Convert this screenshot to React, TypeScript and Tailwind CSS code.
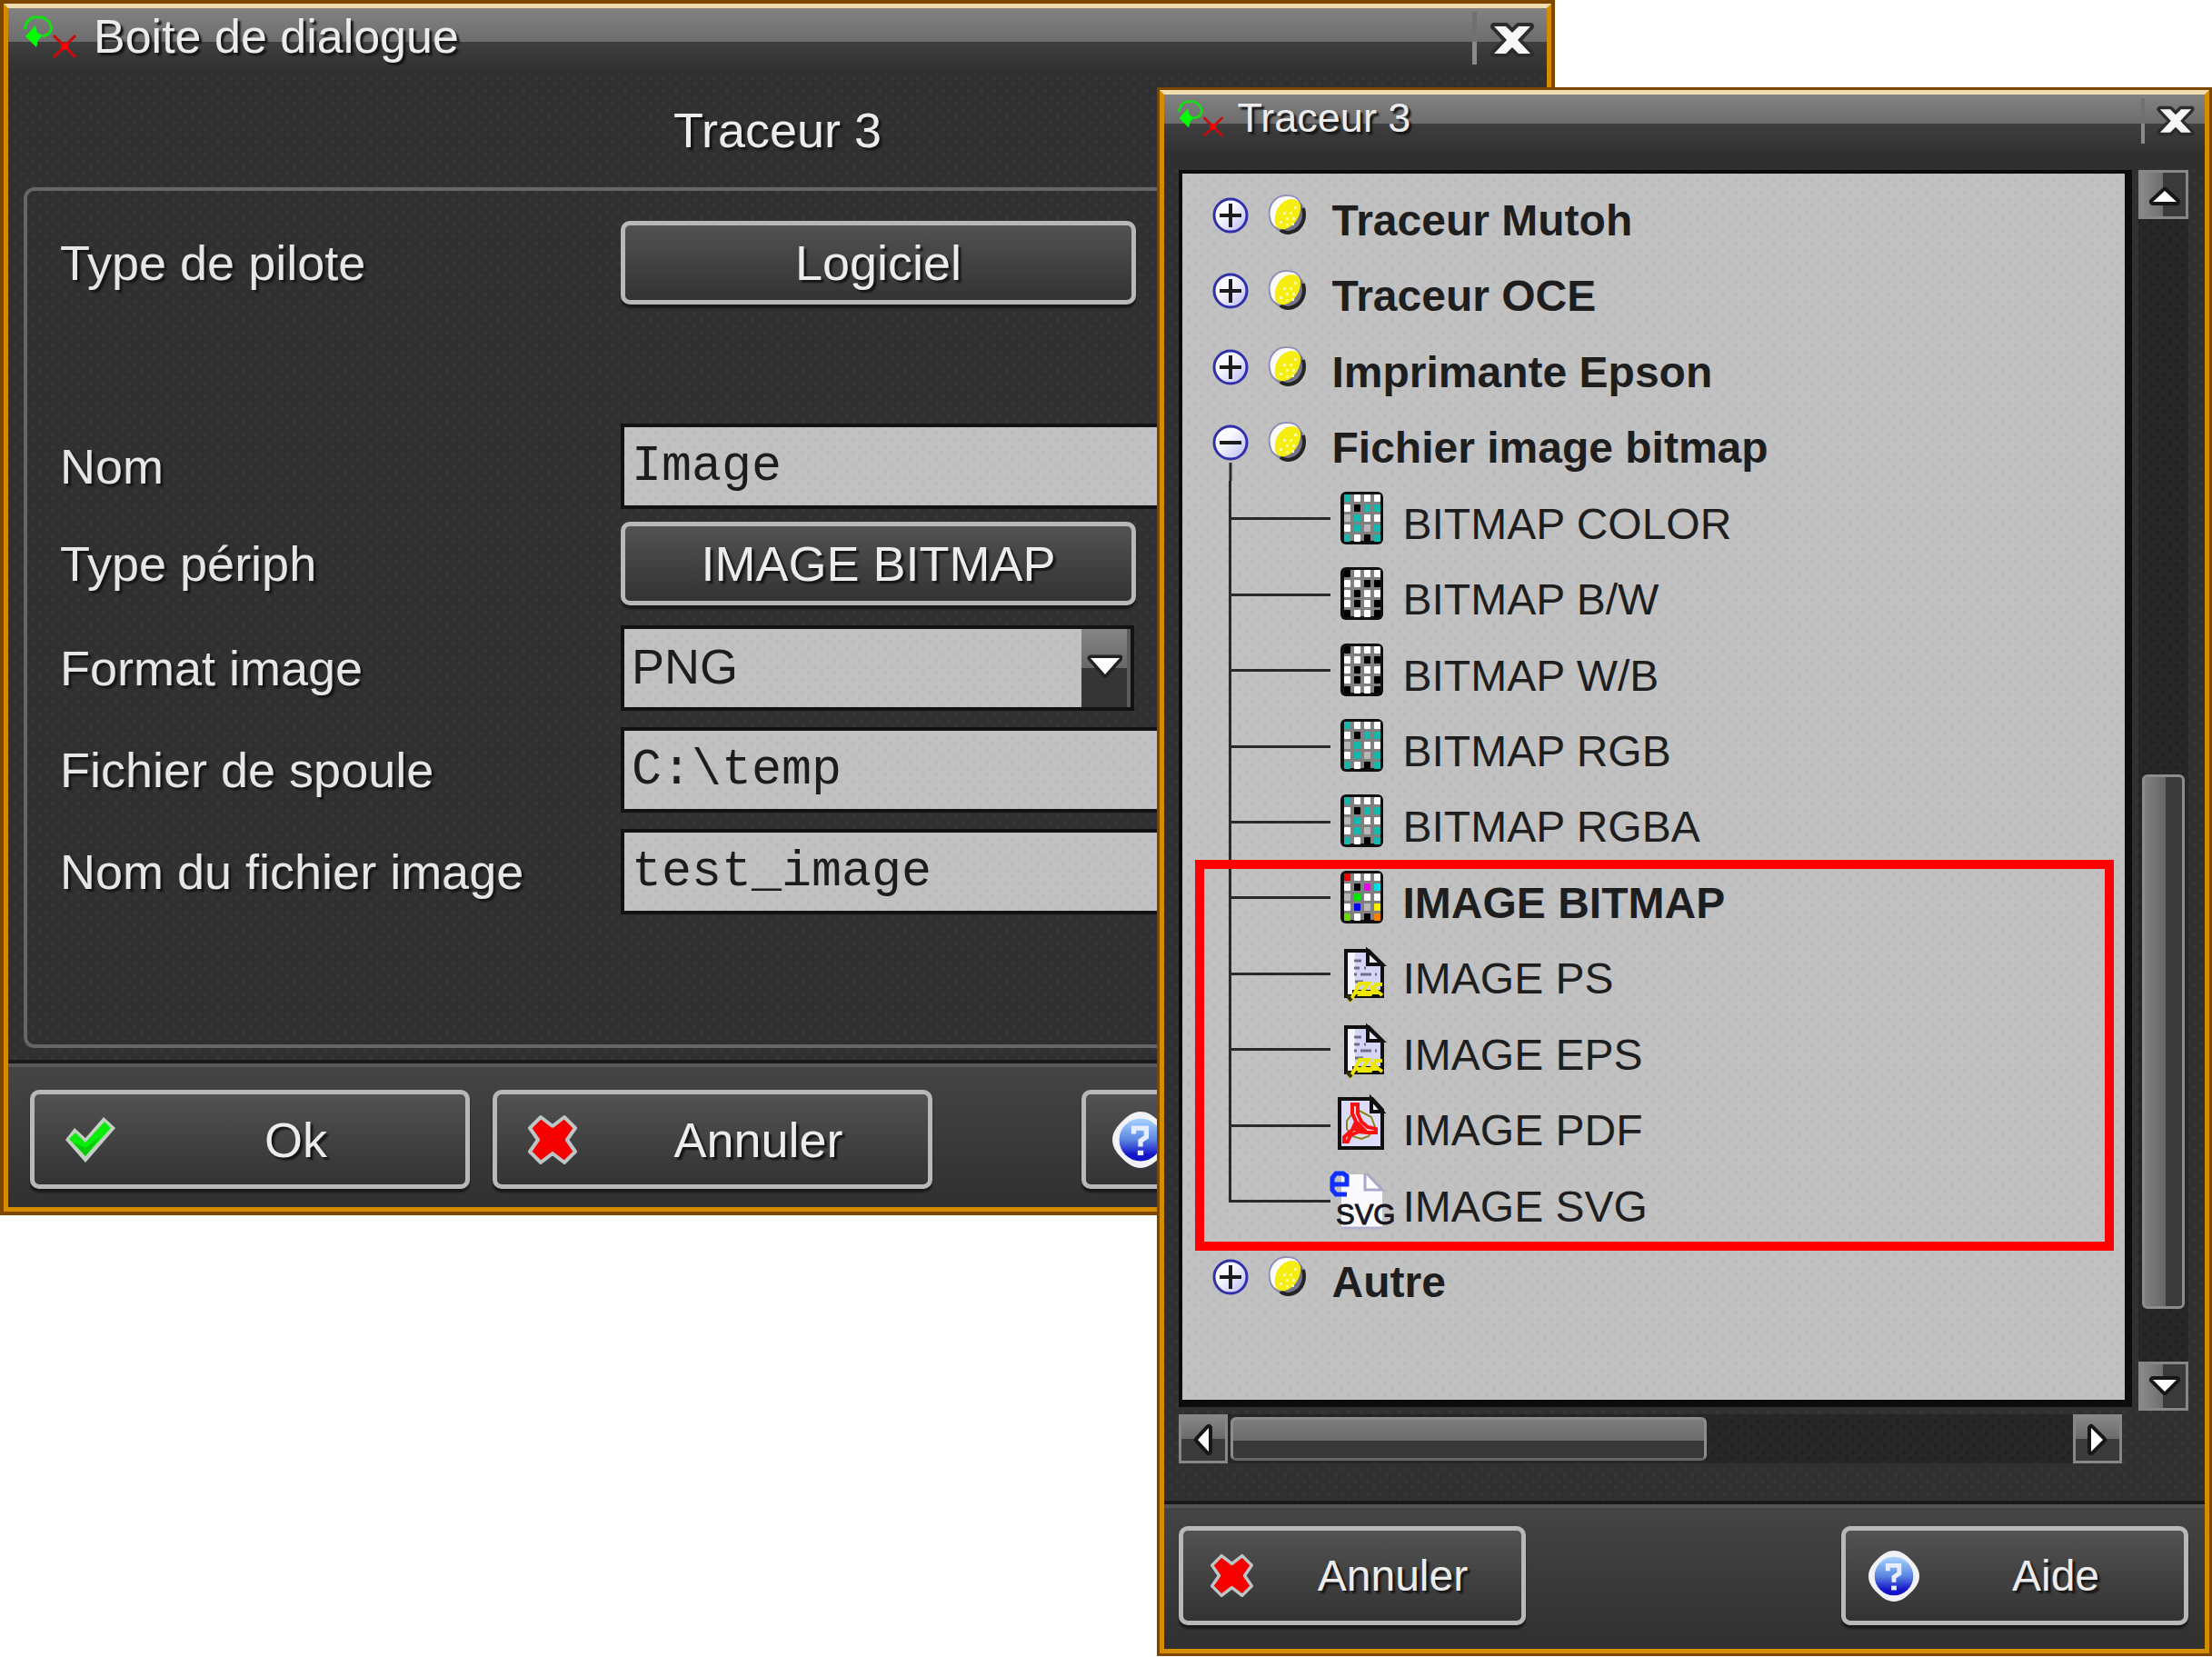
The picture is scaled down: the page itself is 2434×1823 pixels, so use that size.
import { useId, type ReactNode } from "react";

const darkDots =
  "bg-[#303030] [background-image:radial-gradient(circle,#373737_1px,transparent_3px),radial-gradient(circle,#373737_1px,transparent_3px)] [background-size:14px_14px] [background-position:0_0,7px_7px]";
const lightDots =
  "bg-[#c1c1c1] [background-image:radial-gradient(circle,#bababa_1px,transparent_3px),radial-gradient(circle,#bababa_1px,transparent_3px)] [background-size:14px_14px] [background-position:0_0,7px_7px]";
const trackDots =
  "bg-[#272727] [background-image:radial-gradient(circle,#202020_1px,transparent_3px),radial-gradient(circle,#202020_1px,transparent_3px)] [background-size:14px_14px] [background-position:0_0,7px_7px]";

const push =
  "rounded-[10px] border-[5px] border-[#b8b8b8] bg-linear-to-b from-[#525252] to-[#333333] text-[#ececec] shadow-[0_4px_2px_#1a1a1a]";

function AppIcon({ className }: { className: string }) {
  return (
    <svg viewBox="0 0 60 48" className={className} aria-hidden="true">
      <path d="M2 16L5 8L11 3H22L29 8L32 15L29 21L22 24" fill="none" stroke="#12e012" strokeWidth="3" />
      <path d="M3 24L14 12L16 20L22 23L17 28L15 36Z" fill="#0f0" />
      <path d="M34 23L58 47M58 23L34 47" stroke="#d00808" strokeWidth="3" />
      <circle cx="46" cy="35" r="4" fill="#f00" />
    </svg>
  );
}

function CloseIcon({ className }: { className: string }) {
  return (
    <svg viewBox="0 0 50 42" className={className} aria-hidden="true">
      <g strokeLinejoin="round">
        <path
          d="M5 6H18L25 13L32 6H45L31 21L45 36H32L25 29L18 36H5L19 21Z"
          fill="none"
          stroke="#2c2c2c"
          strokeWidth="8"
        />
        <path d="M5 6H18L25 13L32 6H45L31 21L45 36H32L25 29L18 36H5L19 21Z" fill="#f7f7f7" />
      </g>
    </svg>
  );
}

function CheckIcon({ className }: { className: string }) {
  return (
    <svg viewBox="0 0 56 56" className={className} aria-hidden="true">
      <path d="M1 28L11 15L23 26L43 3L56 15L23 53Z" fill="#c4d0c4" />
      <path d="M5 27L12 20L23 31L44 8L51 15L23 46Z" fill="#0aec0a" />
      <path d="M10 31L23 37L40 24L23 46Z" fill="#08c808" />
    </svg>
  );
}

function CrossIcon({ className }: { className: string }) {
  return (
    <svg viewBox="0 0 56 56" className={className} aria-hidden="true">
      <path
        d="M15 3L28 13L41 3L53 15L44 28L53 41L41 53L28 43L15 53L3 41L12 28L3 15Z"
        fill="#f60000"
        stroke="#bcc6c6"
        strokeWidth="4"
        strokeLinejoin="round"
      />
    </svg>
  );
}

function HelpIcon({ className }: { className: string }) {
  const id = useId();
  return (
    <svg viewBox="0 0 60 60" className={className} aria-hidden="true">
      <defs>
        <linearGradient id={id} x1="0" y1="0" x2="0" y2="1">
          <stop offset="0" stopColor="#a8d4ff" />
          <stop offset="0.5" stopColor="#5b86e0" />
          <stop offset="0.85" stopColor="#1414c8" />
        </linearGradient>
      </defs>
      <path
        d="M30 1C38 1 44 6 49 11C54 16 59 22 59 30C59 38 54 44 49 49C44 54 38 59 30 59C22 59 16 54 11 49C6 44 1 38 1 30C1 22 6 16 11 11C16 6 22 1 30 1Z"
        fill="#f2f2f6"
      />
      <circle cx="30" cy="30" r="22" fill={`url(#${id})`} />
      <path d="M23 24V18H36V27L30 31V37" fill="none" stroke="#e8eefc" strokeWidth="5" />
      <rect x="27" y="41" width="6" height="5" fill="#e8eefc" />
    </svg>
  );
}

function Expander({ open }: { open: boolean }) {
  const id = useId();
  return (
    <svg viewBox="0 0 42 84" className="h-[84px] w-[42px]" aria-hidden="true">
      <defs>
        <linearGradient id={id} x1="0" y1="0" x2="1" y2="1">
          <stop offset="0.4" stopColor="#f8f8ff" />
          <stop offset="1" stopColor="#b4b4f4" />
        </linearGradient>
      </defs>
      <circle cx="21" cy="42" r="18" fill={`url(#${id})`} stroke="#3030a8" strokeWidth="3" />
      <path d="M9 42H33" stroke="#1c1c1c" strokeWidth="4" />
      {open ? <path d="M21 64V84" stroke="#2a2a2a" strokeWidth="3" /> : <path d="M21 29V55" stroke="#1c1c1c" strokeWidth="4" />}
    </svg>
  );
}

function Ball() {
  return (
    <svg viewBox="0 0 44 48" className="h-12 w-11" aria-hidden="true">
      <circle cx="21" cy="23" r="20" fill="#74748c" />
      <path d="M14 40C20 45 29 43 34 38C40 32 41 24 39 16" fill="none" stroke="#242424" strokeWidth="4" />
      <path d="M3 30C-2 14 8 1 22 2C28 2 33 5 35 9L12 39C7 37 4 34 3 30Z" fill="#fafafa" stroke="#9090b8" strokeWidth="2" />
      <path d="M8 33C6 20 14 7 26 6C32 6 35 9 36 13C37 24 30 36 19 39C13 40 10 38 8 33Z" fill="#f6ee10" />
      <path
        d="M17 20h3v3h-3zM24 20h3v3h-3zM20 26h3v3h-3zM27 26h3v3h-3zM13 30h3v3h-3zM20 33h3v3h-3zM29 14h3v3h-3zM26 32h3v3h-3z"
        fill="#fff9a0"
      />
    </svg>
  );
}

const T = "#14b8ac";
const W = "#ffffff";
const K = "#000000";
const G = "#b8b8b8";
const colorCells = [T, W, W, W, W, K, T, T, G, T, W, W, W, T, G, T, T, W, K, T];
const monoCells = [K, W, W, W, W, W, K, K, W, K, W, W, W, K, W, K, K, W, W, K];
const paletteCells = [
  "#f00000", W, W, W, W, K, "#f000f0", "#00e0e8", G, "#00e800", W, W, W, "#0000f0", G, "#f8f000",
  "#70d800", W, K, "#f88000",
];

function BitmapIcon({ cells }: { cells: string[] }) {
  return (
    <>
      <rect x="11" y="12" width="47" height="58" rx="6" fill="#101010" />
      <rect x="15" y="15" width="40" height="51" fill="#808080" />
      {cells.map((c, i) => (
        <rect key={i} x={15 + (i % 4) * 11} y={15 + Math.floor(i / 4) * 11} width="7" height="8" rx="1" fill={c} />
      ))}
    </>
  );
}

function PsIcon() {
  return (
    <>
      <path d="M17 17H42L57 32V67H17Z" fill="#d4d4f4" stroke="#101010" strokeWidth="4" />
      <path d="M19 19H27V64H19Z" fill="#f4f4fc" />
      <path d="M41 17V32H57Z" fill="#e8e8f8" stroke="#101010" strokeWidth="4" />
      <path d="M26 28H34M26 36H32M37 36H39M26 43H29M33 43H45M49 43H51M27 51H36" stroke="#70708c" strokeWidth="3" />
      <path d="M24 60H58V68H24Z" fill="#101010" />
      <path
        d="M21 73L27 63L32 53H42L33 65H44L50 54H57M44 56L57 66M28 63H52"
        fill="none"
        stroke="#ece800"
        strokeWidth="4"
      />
      <path d="M18 66L23 72" stroke="#303000" strokeWidth="4" />
    </>
  );
}

function PdfIcon() {
  return (
    <>
      <path d="M10 13H46L57 25V67H10Z" fill="#dcdcf8" stroke="#101010" strokeWidth="4" />
      <path d="M45 13V27H57Z" fill="#f4f4fc" stroke="#101010" strokeWidth="4" />
      <path d="M28 24L18 37V46L24 54L34 57L42 54L49 44L45 33Z" fill="none" stroke="#8a8418" strokeWidth="2" />
      <path
        d="M24 19H30V29L34 38L41 44L50 46V50H40L31 49L22 53L19 60H15V55L24 47L28 38L24 29ZM30 40L28 46H36Z"
        fill="#ffd8e0"
        stroke="#fa1010"
        strokeWidth="4"
      />
    </>
  );
}

function SvgFileIcon() {
  return (
    <>
      <path d="M12 12H42L57 28V70H12Z" fill="#fafafe" />
      <path d="M38 11V29H57L40 11" fill="#fff" stroke="#a8a8c8" strokeWidth="3" />
      <path d="M12 71H57" stroke="#b0b0cc" strokeWidth="3" />
      <path d="M2 23H18V14L14 11H6L2 16V29L6 34H18" fill="none" stroke="#1030ff" strokeWidth="5" />
      <text x="6" y="67" fontFamily="Liberation Sans, sans-serif" fontSize="31" fill="#181820" stroke="#181820">
        SVG
      </text>
    </>
  );
}

type Leaf = { name: string; icon: ReactNode; selected?: boolean };

const drivers: Leaf[] = [
  { name: "BITMAP COLOR", icon: <BitmapIcon cells={colorCells} /> },
  { name: "BITMAP B/W", icon: <BitmapIcon cells={monoCells} /> },
  { name: "BITMAP W/B", icon: <BitmapIcon cells={monoCells} /> },
  { name: "BITMAP RGB", icon: <BitmapIcon cells={colorCells} /> },
  { name: "BITMAP RGBA", icon: <BitmapIcon cells={colorCells} /> },
];
const images: Leaf[] = [
  { name: "IMAGE BITMAP", icon: <BitmapIcon cells={paletteCells} />, selected: true },
  { name: "IMAGE PS", icon: <PsIcon /> },
  { name: "IMAGE EPS", icon: <PsIcon /> },
  { name: "IMAGE PDF", icon: <PdfIcon /> },
  { name: "IMAGE SVG", icon: <SvgFileIcon /> },
];

function Category({ name, open = false }: { name: string; open?: boolean }) {
  return (
    <li className="flex min-h-0 flex-1 items-center pl-[31px]">
      <button type="button" aria-expanded={open} aria-label={name} className="mr-5">
        <Expander open={open} />
      </button>
      <Ball />
      <span className="pt-3 pl-[27px] font-bold">{name}</span>
    </li>
  );
}

function LeafRow({ leaf, last = false }: { leaf: Leaf; last?: boolean }) {
  return (
    <li className="flex min-h-0 flex-1 items-center pl-[50px]">
      <span className="flex w-28 flex-col self-stretch">
        <span className="flex-1 border-b-[3px] border-l-[3px] border-[#2a2a2a]" />
        <span className={last ? "flex-1" : "flex-1 border-l-[3px] border-[#2a2a2a]"} />
      </span>
      <svg viewBox="0 0 76 84" className="mr-1 h-[84px] w-[76px] overflow-visible" aria-hidden="true">
        {leaf.icon}
      </svg>
      <span className={leaf.selected ? "pt-3 font-bold" : "pt-3"}>{leaf.name}</span>
    </li>
  );
}

function Frame({ className, label, children }: { className: string; label: string; children: ReactNode }) {
  return (
    <section role="dialog" aria-label={label} className={`absolute border-[#7c4600] ${className}`}>
      <div className={`border-x-[5px] border-t-[5px] border-b-[5px] border-[#d58d00] border-t-[#f1deb0] ${darkDots}`}>
        {children}
      </div>
    </section>
  );
}

function ScrollButton({ vertical, label, d }: { vertical: boolean; label: string; d: string }) {
  return (
    <button
      type="button"
      aria-label={label}
      className={
        vertical
          ? "flex h-[54px] w-full items-center justify-center border-[3px] border-[#8a8686] bg-linear-to-r from-[#8a8a8a] from-0% via-[#6e6e6e] via-50% to-[#3a3a3a] to-50%"
          : "flex h-full w-[54px] items-center justify-center border-[3px] border-[#8a8686] bg-linear-to-b from-[#868686] from-0% via-[#6a6a6a] via-50% to-[#3a3a3a] to-50%"
      }
    >
      <svg viewBox="0 0 40 40" className="size-10" aria-hidden="true">
        <path d={d} fill="#fff" stroke="#161616" strokeWidth="8" strokeLinejoin="round" />
        <path d={d} fill="#fff" />
      </svg>
    </button>
  );
}

function FieldRow({ label, id, children, up = false }: { label: string; id: string; children: ReactNode; up?: boolean }) {
  return (
    <div className={up ? "flex h-[110px] items-center pb-2" : "flex h-28 items-center"}>
      <label htmlFor={id} className={`w-[617px] shrink-0 text-[#e6e6e6] ${shadow}`}>
        {label}
      </label>
      {children}
    </div>
  );
}

const box = `h-[94px] border-4 border-[#121212] text-[#1c1c1c] outline-none ${lightDots}`;
const mono = "min-w-0 flex-1 pl-2 text-[55px] font-['Liberation_Mono',monospace]";
const shadow = "[text-shadow:3px_3px_2px_#151515]";

export default function App() {
  return (
    <main className="relative min-h-screen overflow-hidden bg-white font-['Liberation_Sans',Arial,sans-serif]">
      <Frame className="top-0 left-0 w-[70.3%] border-4" label="Boite de dialogue">
        <header className="flex h-[71px] items-start bg-linear-to-b from-[#828282] from-0% via-[#6d6d6d] via-[37px] to-transparent">
          <div className="flex h-full w-full bg-linear-to-b from-transparent from-[37px] via-[#3f3f3f] via-[37px] to-[#303030]">
            <AppIcon className="mt-[7px] ml-4 h-12 w-[60px]" />
            <h1 className={`pl-[18px] text-[52px] leading-[62px] text-[#ececec] ${shadow}`}>Boite de dialogue</h1>
            <span className="mt-1 ml-auto h-[58px] w-[5px] bg-linear-to-b from-[#707070] from-[33px] to-[#8a8a8a] to-[33px]" />
            <button type="button" aria-label="Fermer" className="mt-[14px] mr-[13px] ml-[14px] h-[42px]">
              <CloseIcon className="h-[42px] w-[50px]" />
            </button>
          </div>
        </header>
        <h2 className={`text-center text-[54px] leading-[126px] text-[#ececec] ${shadow}`}>Traceur 3</h2>
        <form className="text-[54px] leading-[62px]">
          <div className="mx-[17px] rounded-xl border-[4px] border-[#666666] pt-[23px] pr-8 pb-[134px] pl-9">
            <FieldRow label="Type de pilote" id="pilote">
              <button id="pilote" type="button" className={`h-[92px] w-[567px] ${push} ${shadow}`}>
                Logiciel
              </button>
            </FieldRow>
            <div className="h-28" />
            <FieldRow label="Nom" id="nom">
              <input id="nom" defaultValue="Image" className={`${mono} ${box}`} />
            </FieldRow>
            <FieldRow label="Type périph" id="periph" up>
              <button id="periph" type="button" className={`h-[92px] w-[567px] ${push} ${shadow}`}>
                IMAGE BITMAP
              </button>
            </FieldRow>
            <FieldRow label="Format image" id="format">
              <div className="relative w-[565px]">
                <select id="format" className={`w-full appearance-none pb-1 pl-2 ${box}`}>
                  <option>PNG</option>
                </select>
                <span className="pointer-events-none absolute top-1 right-1 bottom-1 flex w-[54px] items-center justify-center border-r-4 border-[#5c5c5c] bg-linear-to-b from-[#868686] from-0% via-[#686868] via-50% to-[#353535] to-50%">
                  <svg viewBox="0 0 40 40" className="size-10" aria-hidden="true">
                    <path d="M5 9H37L21 27Z" fill="none" stroke="#202020" strokeWidth="7" strokeLinejoin="round" />
                    <path d="M5 9H37L21 27Z" fill="#fff" />
                  </svg>
                </span>
              </div>
            </FieldRow>
            <FieldRow label="Fichier de spoule" id="spoule">
              <input id="spoule" defaultValue={"C:\\temp"} className={`${mono} ${box}`} />
            </FieldRow>
            <FieldRow label="Nom du fichier image" id="fichier">
              <input id="fichier" defaultValue="test_image" className={`${mono} ${box}`} />
            </FieldRow>
          </div>
          <footer className="mt-[13px] flex gap-[25px] border-t-4 border-[#191919] bg-linear-to-b from-[#454545] to-[#303030] pr-7 pb-5 pl-6 shadow-[inset_0_4px_0_#5a5a5a]">
            <button type="button" className={`mt-[29px] flex h-[109px] w-[484px] items-center gap-3 pl-[33px] ${push}`}>
              <CheckIcon className="size-14" />
              <span className={`flex-1 text-center ${shadow}`}>Ok</span>
            </button>
            <button type="button" className={`mt-[29px] flex h-[109px] w-[484px] items-center gap-3 pl-[33px] ${push}`}>
              <CrossIcon className="size-14" />
              <span className={`flex-1 text-center ${shadow}`}>Annuler</span>
            </button>
            <button type="button" className={`mt-[29px] ml-auto flex h-[109px] w-[484px] items-center gap-3 pl-7 ${push}`}>
              <HelpIcon className="size-16" />
              <span className={`flex-1 text-center ${shadow}`}>Aide</span>
            </button>
          </footer>
        </form>
      </Frame>

      <Frame className="top-24 right-0 w-[47.72%] border-[3px]" label="Traceur 3">
        <header className="h-[83px] bg-linear-to-b from-[#828282] from-0% via-[#6d6d6d] via-[32px] to-transparent">
          <div className="flex h-full items-start bg-linear-to-b from-transparent from-[32px] via-[#3f3f3f] via-[32px] to-[#303030] to-[66px]">
            <AppIcon className="mt-[5px] ml-[14px] h-[42px] w-[52px]" />
            <h1 className={`pl-[15px] text-[45px] leading-[52px] text-[#ececec] ${shadow}`}>Traceur 3</h1>
            <span className="mt-1 ml-auto h-[50px] w-1 bg-linear-to-b from-[#707070] from-[28px] to-[#8a8a8a] to-[28px]" />
            <button type="button" aria-label="Fermer" className="mt-[11px] mr-[10px] ml-3 h-9">
              <CloseIcon className="h-9 w-[44px]" />
            </button>
          </div>
        </header>
        <div className="flex gap-[7px] pr-[18px] pl-4 text-[48px] leading-[56px] text-[#1e1e1e]">
          <div className={`mb-1 min-w-0 flex-1 border-4 border-r-8 border-b-8 border-[#0c0c0c] pt-1 pb-[93px] pl-px ${lightDots}`}>
            <ul className="flex h-[1252px] flex-col">
              <Category name="Traceur Mutoh" />
              <Category name="Traceur OCE" />
              <Category name="Imprimante Epson" />
              <Category name="Fichier image bitmap" open />
              {drivers.map((leaf) => (
                <LeafRow key={leaf.name} leaf={leaf} />
              ))}
              <li className="relative min-h-0 flex-5">
                <ul className="flex h-full flex-col">
                  {images.map((leaf, i) => (
                    <LeafRow key={leaf.name} leaf={leaf} last={i === images.length - 1} />
                  ))}
                </ul>
                <span className="pointer-events-none absolute top-0 right-3 -bottom-3 left-[13px] border-10 border-[#ff0000]" />
              </li>
              <Category name="Autre" />
            </ul>
          </div>
          <div className={`flex w-[55px] flex-col ${trackDots}`}>
            <ScrollButton vertical label="Haut" d="M8 28H34L21 16Z" />
            <div className="flex flex-1 flex-col px-1">
              <div className="flex-[614]" />
              <div className="flex-[585] rounded-[6px] border-[3px] border-[#8c8c8c] bg-linear-to-r from-[#808080] from-0% via-[#666666] via-55% to-[#3a3a3a] to-55%" />
              <div className="flex-[58]" />
            </div>
            <ScrollButton vertical label="Bas" d="M8 13H34L21 26Z" />
          </div>
        </div>
        <div className={`mt-1 mr-[91px] ml-4 flex h-[54px] ${trackDots}`}>
          <ScrollButton vertical={false} label="Gauche" d="M26 8V34L14 21Z" />
          <div className="flex flex-1 py-[3px] pl-[3px]">
            <div className="w-[56.5%] rounded-[6px] border-[3px] border-[#8c8c8c] border-b-[#666666] bg-linear-to-b from-[#7c7c7c] from-0% via-[#6c6c6c] via-55% to-[#383838] to-55%" />
          </div>
          <ScrollButton vertical={false} label="Droite" d="M13 8V34L26 21Z" />
        </div>
        <footer className="mt-[41px] flex justify-between border-t-4 border-[#191919] bg-linear-to-b from-[#454545] to-[#303030] pt-6 pr-[18px] pb-[26px] pl-4 text-[48px] leading-[56px] shadow-[inset_0_4px_0_#545454]">
          <button type="button" className={`flex h-[109px] w-[382px] items-center gap-3 pl-[29px] ${push}`}>
            <CrossIcon className="size-[49px]" />
            <span className={`flex-1 text-center ${shadow}`}>Annuler</span>
          </button>
          <button type="button" className={`flex h-[109px] w-[382px] items-center gap-2 pl-6 ${push}`}>
            <HelpIcon className="size-[58px]" />
            <span className={`flex-1 text-center ${shadow}`}>Aide</span>
          </button>
        </footer>
      </Frame>
    </main>
  );
}
